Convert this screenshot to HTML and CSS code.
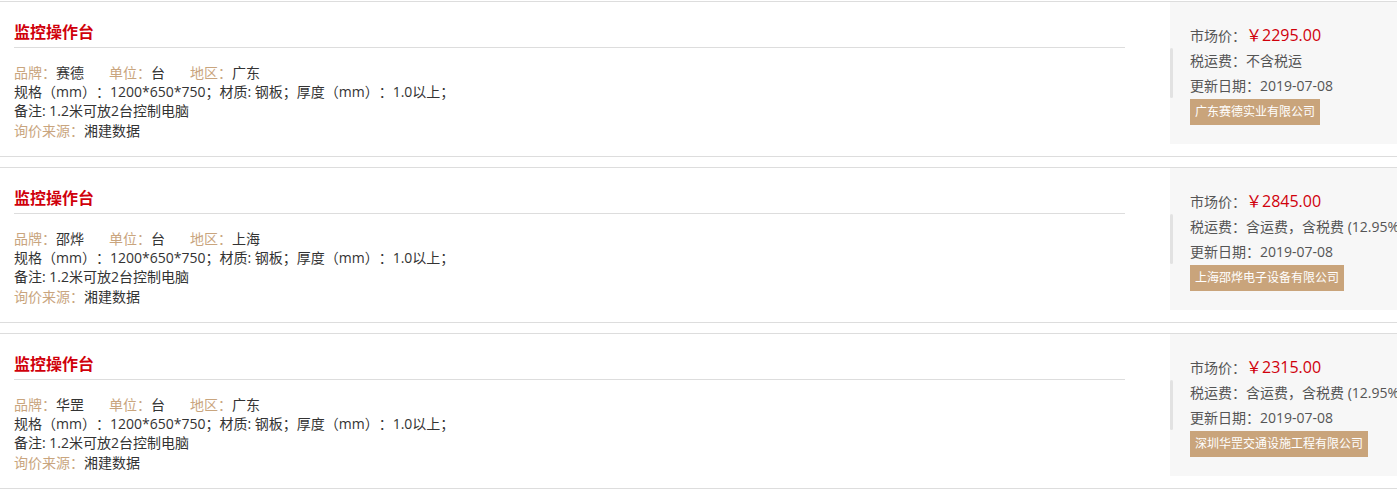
FILE: index.html
```html
<!DOCTYPE html>
<html lang="zh-CN">
<head>
  <meta charset="UTF-8">
  <title>监控操作台 - 询价结果</title>
  <link rel="stylesheet" href="styles.css">
</head>
<body>
  <div class="list">

    <div class="item">
      <div class="main">
        <h3 class="title">监控操作台</h3>
        <div class="info">
          <p><span class="field"><em>品牌：</em>赛德</span><span class="field"><em>单位：</em>台</span><span class="field"><em>地区：</em>广东</span></p>
          <p>规格（mm）：1200*650*750；材质: 钢板；厚度（mm）：1.0以上；</p>
          <p>备注: 1.2米可放2台控制电脑</p>
          <p class="source"><em>询价来源：</em>湘建数据</p>
        </div>
      </div>
      <div class="side">
        <p>市场价：<span class="price">￥2295.00</span></p>
        <p>税运费：不含税运</p>
        <p>更新日期：2019-07-08</p>
        <span class="company">广东赛德实业有限公司</span>
      </div>
    </div>

    <div class="item">
      <div class="main">
        <h3 class="title">监控操作台</h3>
        <div class="info">
          <p><span class="field"><em>品牌：</em>邵烨</span><span class="field"><em>单位：</em>台</span><span class="field"><em>地区：</em>上海</span></p>
          <p>规格（mm）：1200*650*750；材质: 钢板；厚度（mm）：1.0以上；</p>
          <p>备注: 1.2米可放2台控制电脑</p>
          <p class="source"><em>询价来源：</em>湘建数据</p>
        </div>
      </div>
      <div class="side">
        <p>市场价：<span class="price">￥2845.00</span></p>
        <p>税运费：含运费，含税费 (12.95%)</p>
        <p>更新日期：2019-07-08</p>
        <span class="company">上海邵烨电子设备有限公司</span>
      </div>
    </div>

    <div class="item">
      <div class="main">
        <h3 class="title">监控操作台</h3>
        <div class="info">
          <p><span class="field"><em>品牌：</em>华罡</span><span class="field"><em>单位：</em>台</span><span class="field"><em>地区：</em>广东</span></p>
          <p>规格（mm）：1200*650*750；材质: 钢板；厚度（mm）：1.0以上；</p>
          <p>备注: 1.2米可放2台控制电脑</p>
          <p class="source"><em>询价来源：</em>湘建数据</p>
        </div>
      </div>
      <div class="side">
        <p>市场价：<span class="price">￥2315.00</span></p>
        <p>税运费：含运费，含税费 (12.95%)</p>
        <p>更新日期：2019-07-08</p>
        <span class="company">深圳华罡交通设施工程有限公司</span>
      </div>
    </div>

  </div>
</body>
</html>
```

FILE: styles.css
```css
html, body {
  overflow: hidden;
}

body {
  margin: 0;
  padding-top: 1px;
  font-family: "Open Sans", "Noto Sans CJK TC", "Noto Sans CJK SC", sans-serif;
  font-size: 14px;
  color: #333;
  background: #fff;
  text-spacing-trim: space-all;
}

p {
  margin: 0;
}

em {
  font-style: normal;
  color: #c9a57e;
}

.list {
  width: 1420px;
}

.item {
  display: flex;
  height: 154px;
  border-top: 1px solid #ddd;
  border-bottom: 1px solid #ddd;
  margin-bottom: 10px;
}

.main {
  flex: 1;
  padding: 18px 45px 0 14px;
}

.title {
  margin: 0;
  padding-bottom: 3px;
  font-size: 16px;
  line-height: 24px;
  font-weight: bold;
  color: #d0000b;
  border-bottom: 1px solid #ddd;
}

.info {
  margin-top: 15px;
  line-height: 19px;
}

.field {
  margin-right: 25px;
}

.source {
  margin-top: 1px;
}

.side {
  position: relative;
  flex: 0 0 230px;
  align-self: flex-start;
  height: 121px;
  padding: 21px 0 0 20px;
  background: #f7f7f7;
  color: #555;
  line-height: 25px;
  white-space: nowrap;
}

.side::before {
  content: "";
  position: absolute;
  left: 0;
  top: 46px;
  width: 3px;
  height: 50px;
  border-radius: 2px;
  background: #e2e2e2;
}

.price {
  font-size: 16px;
  color: #d0000b;
}

.company {
  display: inline-block;
  margin-top: 1px;
  padding: 0 5px;
  font-size: 12px;
  line-height: 26px;
  color: #fff;
  background: #c9a47b;
}
```
